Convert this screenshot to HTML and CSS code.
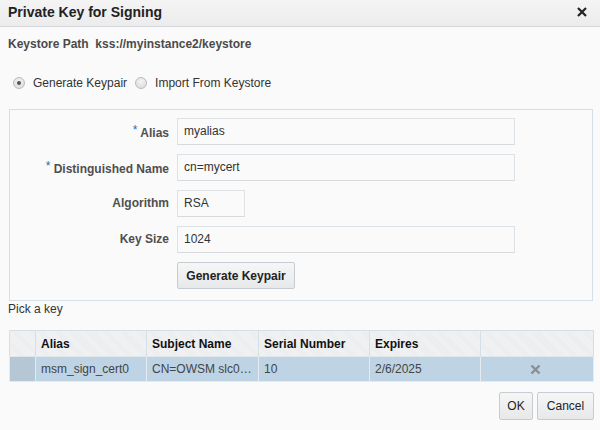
FILE: index.html
```html
<!DOCTYPE html>
<html>
<head>
<meta charset="utf-8">
<link rel="stylesheet" href="styles.css">
</head>
<body>
<div class="dialog">
  <div class="titlebar">
    <span class="title">Private Key for Signing</span>
    <svg class="close" width="10" height="10" viewBox="0 0 10 10"><path d="M1 1 L9 9 M9 1 L1 9" stroke="#222" stroke-width="2.2" stroke-linecap="butt"/></svg>
  </div>
  <div class="content">
    <div class="kspath">Keystore Path&nbsp;&nbsp;kss://myinstance2/keystore</div>
    <div class="radios">
      <span class="radio checked"></span><span class="rlabel">Generate Keypair</span>
      <span class="radio second"></span><span class="rlabel">Import From Keystore</span>
    </div>
    <div class="formbox">
      <div class="form">
        <label class="lbl"><span class="req">*</span> Alias</label>
        <div class="field wide">myalias</div>
        <label class="lbl"><span class="req">*</span> Distinguished Name</label>
        <div class="field wide">cn=mycert</div>
        <label class="lbl">Algorithm</label>
        <div class="field short">RSA</div>
        <label class="lbl">Key Size</label>
        <div class="field wide">1024</div>
        <span></span>
        <div><button class="btn genbtn">Generate Keypair</button></div>
      </div>
    </div>
    <div class="pick">Pick a key</div>
    <table class="grid">
      <thead>
        <tr><th class="c0"></th><th class="c1">Alias</th><th class="c2">Subject Name</th><th class="c3">Serial Number</th><th class="c4">Expires</th><th class="c5"></th></tr>
      </thead>
      <tbody>
        <tr class="sel"><td class="c0 sel0"></td><td>msm_sign_cert0</td><td>CN=OWSM slc0…</td><td>10</td><td>2/6/2025</td><td class="del"><svg width="11" height="11" viewBox="0 0 11 11"><path d="M1.5 1.5 L9.5 9.5 M9.5 1.5 L1.5 9.5" stroke="#8a8f94" stroke-width="2.4"/></svg></td></tr>
      </tbody>
    </table>
    <div class="actions">
      <button class="btn ok">OK</button>
      <button class="btn cancel">Cancel</button>
    </div>
  </div>
</div>
</body>
</html>
```
FILE: styles.css
```css
html, body {
  margin: 0;
  padding: 0;
  background: #fafafa;
  font-family: "Liberation Sans", Arial, sans-serif;
  font-size: 12px;
  color: #333;
}
.dialog {
  width: 600px;
  height: 430px;
  overflow: hidden;
}
.titlebar {
  height: 27px;
  box-sizing: border-box;
  border-bottom: 1px solid #d4d8dc;
  background: linear-gradient(#f4f4f4, #ececec);
  display: flex;
  align-items: center;
  justify-content: space-between;
  padding: 0 13px 0 8px;
}
.title {
  font-weight: bold;
  font-size: 14px;
  color: #222;
  margin-top: -2px;
}
.close { margin-top: -2px; }
.content {
  padding: 0 7px 0 9px;
}
.kspath {
  margin-top: 9px;
  margin-left: -1px;
  line-height: 16px;
  font-weight: bold;
  color: #4a4a4a;
}
.radios {
  margin-top: 23px;
  height: 16px;
  display: flex;
  align-items: center;
}
.radio {
  width: 10px;
  height: 10px;
  border: 1px solid #b9bcbf;
  border-radius: 50%;
  background: radial-gradient(circle at 50% 35%, #f4f4f4, #d8d8d8);
  margin-left: 4px;
  margin-right: 8px;
  position: relative;
}
.radio.second { margin-left: 8px; }
.radio.checked::after {
  content: "";
  position: absolute;
  left: 3px;
  top: 3px;
  width: 4px;
  height: 4px;
  border-radius: 50%;
  background: #555;
}
.rlabel {
  color: #333;
}
.formbox {
  margin-top: 18px;
  border: 1px solid #d6dfe6;
  height: 190px;
  box-sizing: content-box;
}
.form {
  display: grid;
  grid-template-columns: 159px auto;
  column-gap: 8px;
  row-gap: 9px;
  padding-top: 8px;
  justify-items: start;
}
.lbl {
  justify-self: end;
  align-self: center;
  font-weight: bold;
  color: #4f4f4f;
  margin-top: -1px;
}
.req {
  color: #2a6bb0;
  font-weight: normal;
  vertical-align: 3px;
}
.field {
  height: 25px;
  line-height: 25px;
  border: 1px solid #dde2e6;
  border-bottom-color: #d8dadc;
  background: #fafafa;
  padding-left: 6px;
  box-sizing: content-box;
  color: #333;
}
.field.wide { width: 330px; }
.field.short { width: 60px; }
.btn {
  font-family: "Liberation Sans", Arial, sans-serif;
  font-size: 12px;
  color: #222;
  background: linear-gradient(#f6f6f6, #e6e8ea);
  border: 1px solid #c6ccd1;
  border-radius: 2px;
  height: 27px;
  padding: 0;
  cursor: default;
}
.genbtn {
  width: 118px;
  font-weight: bold;
}
.pick {
  margin-top: 1px;
  margin-left: -1px;
  line-height: 15px;
  color: #333;
}
.grid {
  margin-top: 13px;
  border-collapse: collapse;
  width: 585px;
  table-layout: fixed;
  border: 1px solid #d6dfe6;
}
.grid th, .grid td {
  border: 1px solid #d6dfe6;
  text-align: left;
  padding: 0 0 0 5px;
  white-space: nowrap;
  overflow: hidden;
}
.grid th {
  height: 25px;
  font-weight: bold;
  color: #111;
  font-size: 12px;
  background: repeating-linear-gradient(45deg, #f2f3f4 0 1px, #e9ebed 1px 2px);
  border-bottom-color: #e0e6ea;
}
.grid td {
  height: 24px;
  color: #444;
  background: #bed3e4;
  border-color: #e4eaee;
}
.grid td.sel0 { background: #b5c7d5; }
.c0 { width: 20px; }
.c1 { width: 105px; }
.c2 { width: 106px; }
.c3 { width: 105px; }
.c4 { width: 105px; }
.c5 { width: auto; }
.grid td.del {
  text-align: center;
  padding: 0;
}
.grid td.del svg { display: block; margin: 1px auto 0 auto; position: relative; left: -2px; }
.actions {
  margin-top: 10px;
  display: flex;
  justify-content: flex-end;
  gap: 4px;
  width: 585px;
}
.ok { width: 34px; height: 28px; }
.cancel { width: 57px; height: 28px; }
```
